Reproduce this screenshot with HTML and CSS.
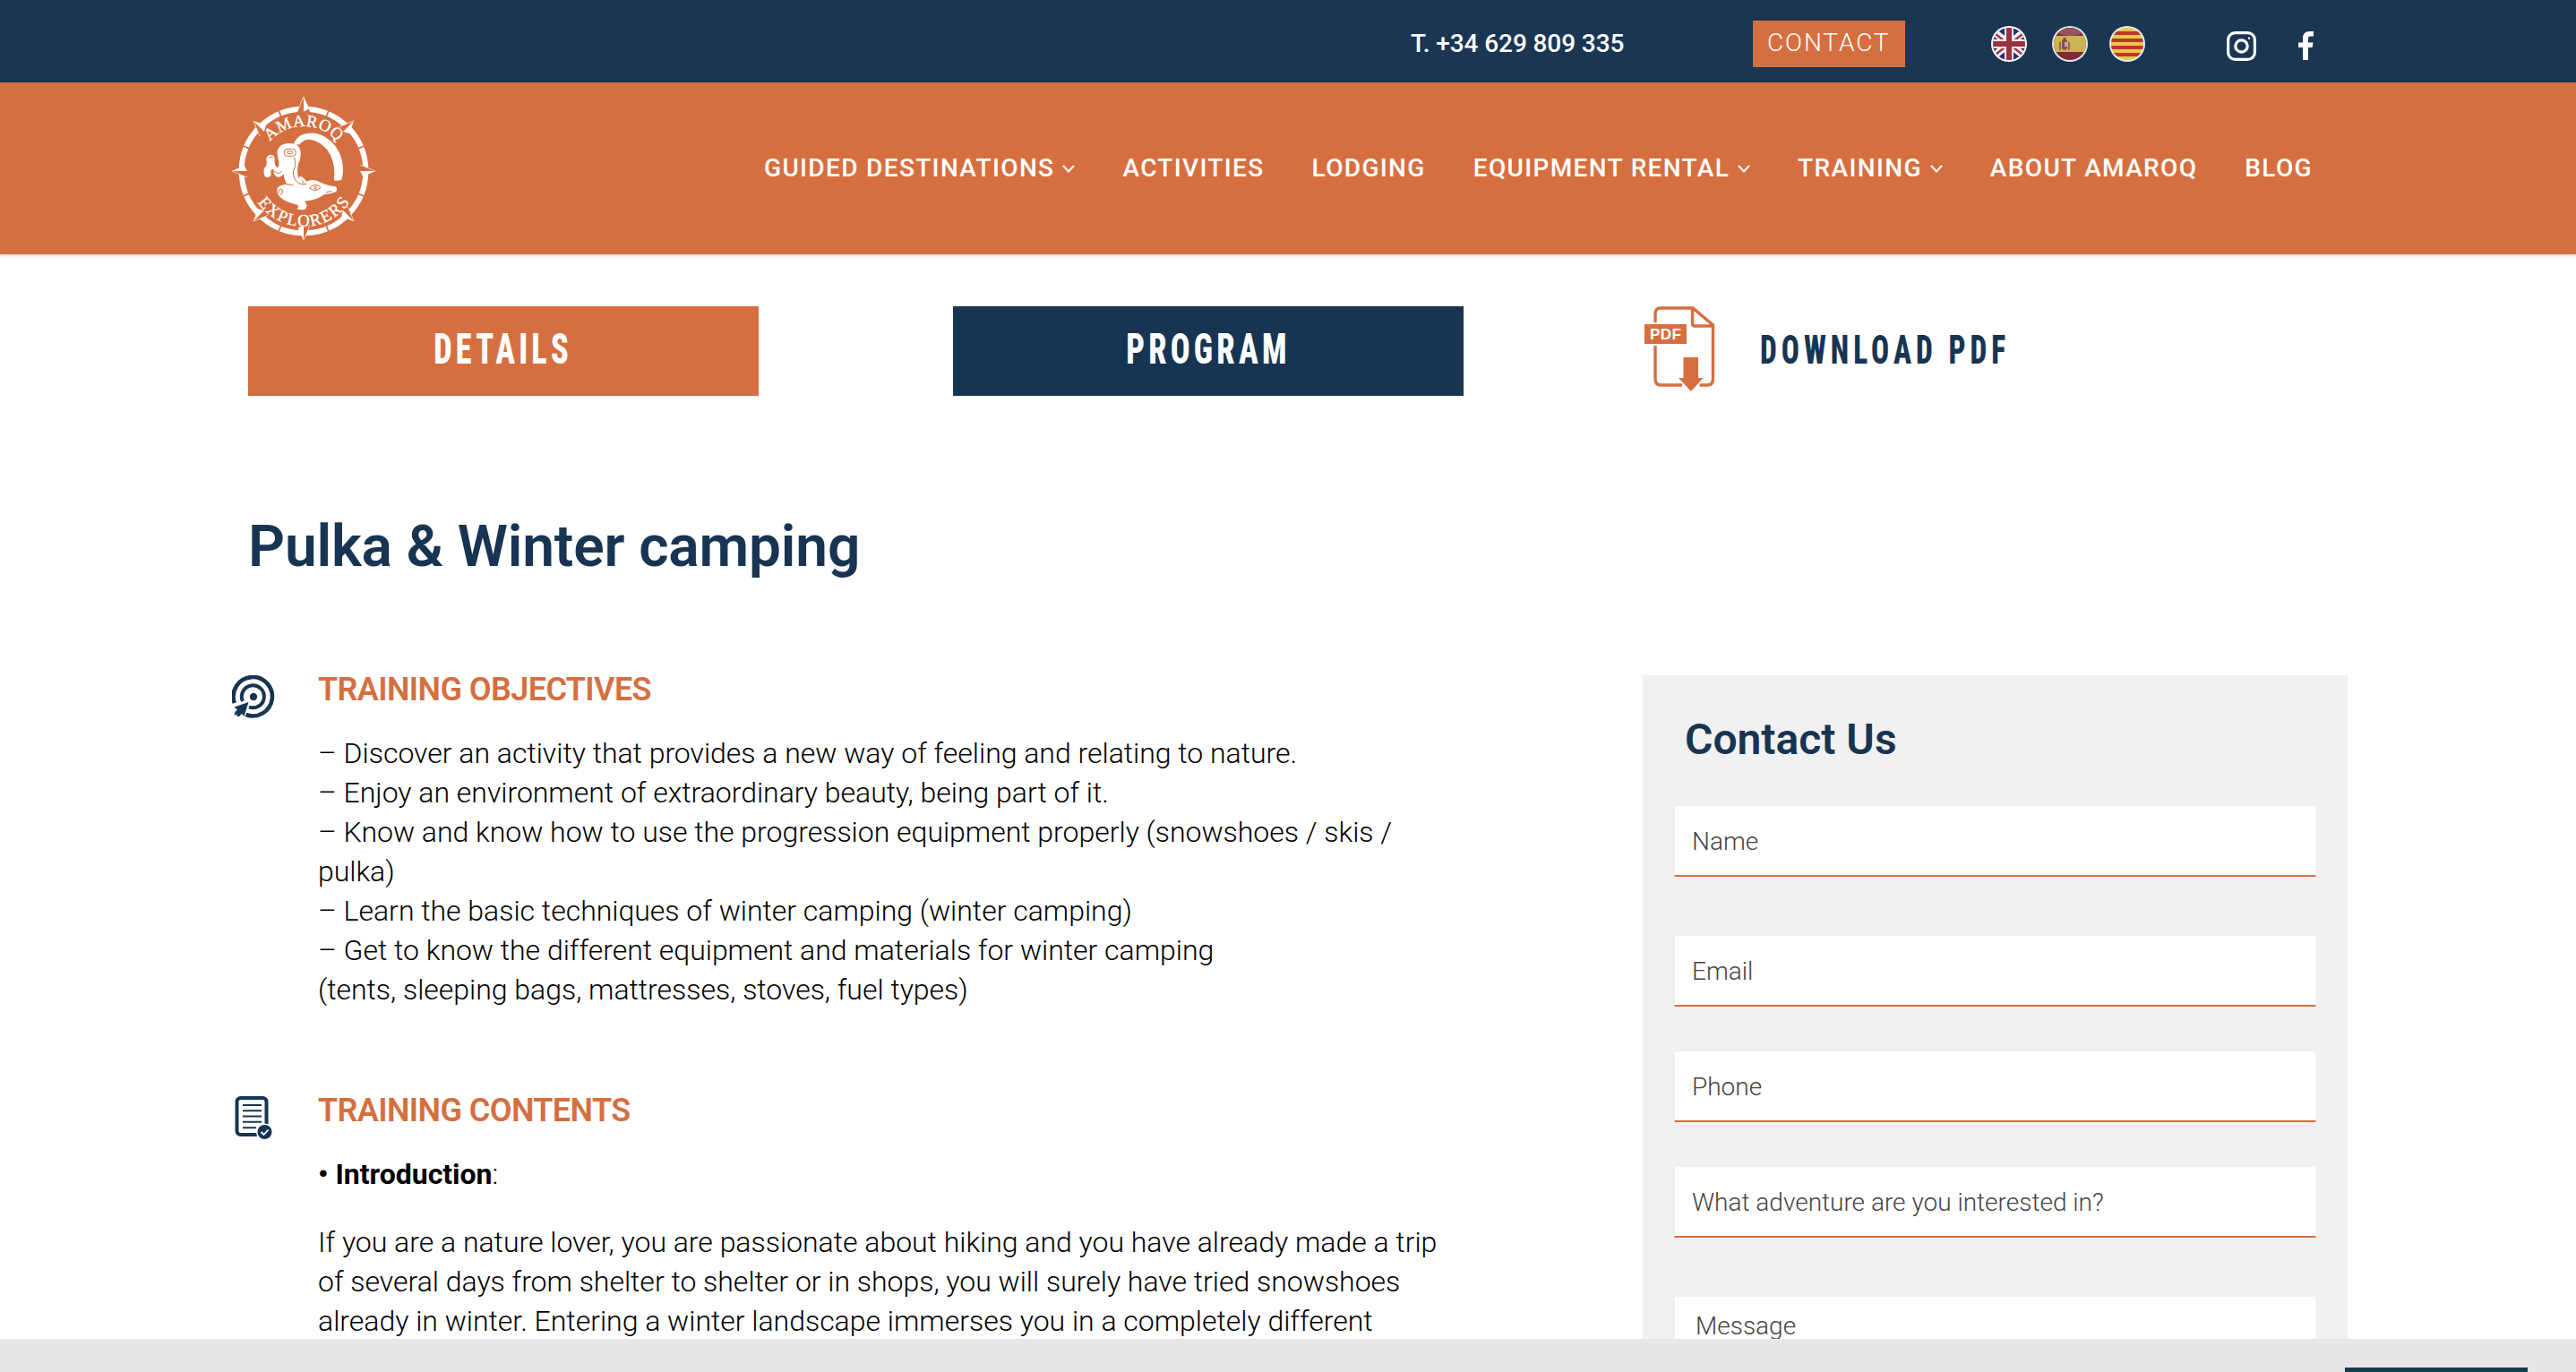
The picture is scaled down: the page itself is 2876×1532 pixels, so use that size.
FILE: index.html
```html
<!DOCTYPE html>
<html lang="en">
<head>
    <meta charset="UTF-8">
    <title>Pulka & Winter camping - Amaroq Explorers</title>
    <link rel="stylesheet" href="styles.css">
</head>
<body>

<div class="topbar">
    <span class="phone">T. +34 629 809 335</span>
    <a class="contact-btn">CONTACT</a>
    <div class="flags">
        <svg class="flag" viewBox="0 0 40 40">
            <clipPath id="round"><circle cx="20" cy="20" r="18"/></clipPath>
            <circle cx="20" cy="20" r="20" fill="#fff"/>
            <g clip-path="url(#round)">
                <rect width="40" height="40" fill="#2d3068"/>
                <path d="M0 4L40 36M40 4L0 36" stroke="#f4f1f5" stroke-width="8"/>
                <path d="M0 5L20 21M40 5L20 21M0 36L20 20M40 36L20 20" stroke="#a8323f" stroke-width="2.4"/>
                <path d="M20 0V40M0 20H40" stroke="#f7f5f6" stroke-width="10"/>
                <path d="M20 0V40M0 20H40" stroke="#98323f" stroke-width="6"/>
            </g>
        </svg>
        <svg class="flag" viewBox="0 0 40 40">
            <circle cx="20" cy="20" r="20" fill="#e3e6ea"/>
            <g clip-path="url(#round)">
                <rect width="40" height="40" fill="#7f2a35"/>
                <ellipse cx="20" cy="6" rx="14" ry="5" fill="#96555c"/>
                <rect y="11" width="40" height="18" fill="#cdb455"/>
                <path d="M9 18v9M19 18v9" stroke="#8d6a50" stroke-width="2"/>
                <path d="M11 16h6v9q-3 4-6 0z" fill="#9a4b4b"/>
                <rect x="14" y="18" width="3" height="5" fill="#b9a9b4"/>
                <circle cx="14" cy="15" r="2" fill="#8a4b3c"/>
            </g>
        </svg>
        <svg class="flag flag-cat" viewBox="0 0 40 40">
            <circle cx="20" cy="20" r="20" fill="#e8ebef"/>
            <g clip-path="url(#round)">
                <rect width="40" height="40" fill="#e3cb46"/>
                <path d="M0 8H40M0 16H40M0 24H40M0 32H40" stroke="#c0332b" stroke-width="4"/>
            </g>
        </svg>
    </div>
    <svg class="ig" viewBox="0 0 33 33" fill="none" stroke="#fff">
        <rect x="1.6" y="1.6" width="29.8" height="29.8" rx="8" stroke-width="3.2"/>
        <circle cx="16.5" cy="16.5" r="6.7" stroke-width="3.2"/>
        <circle cx="25" cy="7.8" r="1.2" fill="#fff" stroke="none"/>
    </svg>
    <svg class="fb" viewBox="0 0 17 32">
        <path d="M5 32V18H0V12.500H5V8Q5 0 12.500 0H17V5.500H13.500Q11 5.500 11 8V12.500H16.500L15.600 18H11V32z" fill="#fff"/>
    </svg>
</div>

<div class="header">
    <svg class="logo" viewBox="54 51 486 486">
        <defs>
            <path id="arcTop" d="M147 303A150 150 0 0 1 447 303"/>
            <path id="arcBottom" d="M111 303A186 186 0 0 0 483 303"/>
            <g id="spike">
                <path d="M297 53L318 105H275z" fill="#d66f40"/>
                <path d="M297 53L316 94L297 104z"/>
                <path d="M297 53L280 93L277 104" fill="none" stroke="#fff" stroke-width="2"/>
            </g>
        </defs>
        <g fill="#fff">
            <circle cx="297" cy="303" r="208" fill="none" stroke="#fff" stroke-width="18"/>
            <g stroke="#d66f40" stroke-width="5">
                <path id="cut" d="M297 80V110M297 496V526" transform="rotate(22.500 297 303)"/>
                <use href="#cut" transform="rotate(45 297 303)"/>
                <use href="#cut" transform="rotate(90 297 303)"/>
                <use href="#cut" transform="rotate(135 297 303)"/>
            </g>
            <use href="#spike"/>
            <use href="#spike" transform="rotate(90 297 303) translate(0 10)"/>
            <use href="#spike" transform="rotate(180 297 303) translate(0 18)"/>
            <use href="#spike" transform="rotate(270 297 303) translate(0 10)"/>
            <use href="#spike" transform="rotate(45 297 303) translate(0 12)"/>
            <use href="#spike" transform="rotate(135 297 303) translate(0 12)"/>
            <use href="#spike" transform="rotate(225 297 303) translate(0 12)"/>
            <use href="#spike" transform="rotate(315 297 303) translate(0 12)"/>
        </g>
        <text class="logo-text"><textPath href="#arcTop" startOffset="50%" text-anchor="middle" textLength="256">AMAROQ</textPath></text>
        <text class="logo-text"><textPath href="#arcBottom" startOffset="50%" text-anchor="middle" textLength="362">EXPLORERS</textPath></text>
        <g fill="#fff">
            <path d="M262 216Q272 188 295 180Q330 168 368 188Q410 212 424 262Q434 300 424 333L402 336Q396 330 400 318Q402 268 376 232Q350 202 318 197Q296 196 283 214z"/>
            <path d="M208 240Q212 212 246 210Q284 208 287 240Q288 262 279 280Q272 310 282 330Q280 318 290 322Q300 328 306 338Q330 326 356 342Q370 350 404 355Q412 362 406 372Q390 380 366 382Q340 402 300 404Q312 416 304 430Q292 436 274 430Q284 422 276 416Q236 408 218 390Q200 370 212 356Q222 348 240 346Q228 322 231 312Q220 326 206 322Q194 314 197 298Q184 292 188 316Q182 330 168 322Q160 306 166 292Q176 286 172 262Q176 248 188 248Q200 250 200 262Q198 282 208 292Q216 290 214 276z"/>
        </g>
        <g fill="none" stroke="#d66f40" stroke-width="3">
            <rect x="232" y="229" width="39" height="24" rx="11"/>
            <rect x="242" y="237" width="19" height="8" rx="4"/>
            <path d="M266 258Q274 284 262 304Q262 330 280 344Q294 350 308 346M208 352Q232 342 262 350"/>
            <path d="M317 360Q336 340 354 358Q336 376 317 360zM212 378Q214 356 226 366Q228 380 218 384M198 302Q212 318 224 304M181 260Q188 250 195 260"/>
            <circle cx="336" cy="359" r="4"/>
            <path d="M372 375Q380 370 392 372M292 334L298 344"/>
        </g>
    </svg>
    <div class="nav">
        <a>GUIDED DESTINATIONS<svg class="chev" viewBox="0 0 14 9"><path d="M1 1L7 7.500L13 1"/></svg></a>
        <a>ACTIVITIES</a>
        <a>LODGING</a>
        <a>EQUIPMENT RENTAL<svg class="chev" viewBox="0 0 14 9"><path d="M1 1L7 7.500L13 1"/></svg></a>
        <a>TRAINING<svg class="chev" viewBox="0 0 14 9"><path d="M1 1L7 7.500L13 1"/></svg></a>
        <a>ABOUT AMAROQ</a>
        <a>BLOG</a>
    </div>
</div>

<div class="tabs">
    <a class="tab tab-details"><span>DETAILS</span></a>
    <a class="tab tab-program"><span>PROGRAM</span></a>
    <a class="download">
        <svg class="pdf" viewBox="0 0 79 96">
            <g fill="none" stroke="#d66f40" stroke-width="3.400">
                <path d="M12 18V8.500Q12 2 18.500 2H54L76.500 21V81Q76.500 88 70 88H61.500M42 88H18.500Q12 88 12 81V44"/>
                <path d="M53.500 2V19Q53.500 22 56.500 22H76"/>
            </g>
            <rect y="20" width="47" height="22" fill="#d66f40"/>
            <path d="M43.500 57H60V80H65.500L52 95L38 80H43.500z" fill="#d66f40"/>
            <text x="6" y="37" textLength="35">PDF</text>
        </svg>
        <span>DOWNLOAD PDF</span>
    </a>
</div>

<h1>Pulka & Winter camping</h1>

<div class="main">
    <div class="content">
        <div class="block">
            <svg class="icon" viewBox="0 0 48 48">
                <g fill="none" stroke="#173552">
                    <path d="M2.800 31A21.700 21.700 0 1 1 15.500 44" stroke-width="4.600"/>
                    <path d="M12 29A12.500 12.500 0 1 1 19 35.500" stroke-width="4"/>
                </g>
                <circle cx="24" cy="24" r="4.200" fill="#173552"/>
                <path d="M18.500 30L13.500 46L11 43L8 46L5.500 46L5.500 43.500L2.500 45L3.500 41L6 38.500L2.500 35.500z" fill="#173552"/>
            </svg>
            <div class="text">
                <h2>TRAINING OBJECTIVES</h2>
                <p>– Discover an activity that provides a new way of feeling and relating to nature.<br>
                – Enjoy an environment of extraordinary beauty, being part of it.<br>
                – Know and know how to use the progression equipment properly (snowshoes / skis / pulka)<br>
                – Learn the basic techniques of winter camping (winter camping)<br>
                – Get to know the different equipment and materials for winter camping<br>
                (tents, sleeping bags, mattresses, stoves, fuel types)</p>
            </div>
        </div>
        <div class="block">
            <svg class="icon" viewBox="0 0 48 48">
                <rect x="5.500" y="2" width="33" height="41" rx="4" fill="none" stroke="#173552" stroke-width="4"/>
                <path d="M12 10H33M12 16.300H33M12 22.500H33M12 28.800H33M12 35.200H27" stroke="#173552" stroke-width="2"/>
                <circle cx="36.500" cy="40" r="9.500" fill="#fff"/>
                <circle cx="36.500" cy="40" r="8" fill="#173552"/>
                <path d="M32.500 40L35.500 43L40.500 37.500" fill="none" stroke="#fff" stroke-width="1.800"/>
            </svg>
            <div class="text">
                <h2>TRAINING CONTENTS</h2>
                <p><strong>• Introduction</strong>:</p>
                <p>If you are a nature lover, you are passionate about hiking and you have already made a trip of several days from shelter to shelter or in shops, you will surely have tried snowshoes already in winter. Entering a winter landscape immerses you in a completely different</p>
            </div>
        </div>
    </div>

    <div class="contact">
        <h3>Contact Us</h3>
        <input class="field" type="text" placeholder="Name">
        <input class="field wide-gap" type="email" placeholder="Email">
        <input class="field" type="text" placeholder="Phone">
        <input class="field" type="text" placeholder="What adventure are you interested in?">
        <textarea class="field message wide-gap" placeholder="Message"></textarea>
    </div>
</div>

<div class="cookies"><div class="cookies-btn"></div></div>

</body>
</html>
```

FILE: styles.css
```css
* {
  box-sizing: border-box;
}
body {
  margin: 0;
  height: 1532px;
  overflow: hidden;
  font-family: Roboto, sans-serif;
  background: #fff;
  color: #000;
}
h1, h2, h3, p {
  margin: 0;
}
svg {
  display: block;
  flex: none;
}

/* top bar */
.topbar {
  display: flex;
  align-items: center;
  height: 92px;
  padding: 6px 0 0 1575px;
  background: #1a3653;
  color: #fff;
}
.phone {
  width: 382px;
  padding-bottom: 2px;
  font-size: 28px;
  font-weight: 500;
  letter-spacing: -0.1px;
}
.contact-btn {
  width: 170px;
  height: 52px;
  padding: 0 0 2px 16px;
  line-height: 50px;
  background: #d66f40;
  font-size: 28px;
  font-weight: 300;
  letter-spacing: 1.9px;
}
.flags {
  display: flex;
  gap: 28px;
  margin-left: 96px;
}
.flag {
  width: 40px;
  height: 40px;
}
.flag-cat {
  margin-left: -4px;
}
.ig {
  width: 33px;
  height: 33px;
  margin: 4px 0 0 91px;
}
.fb {
  width: 17px;
  height: 32px;
  margin: 4px 0 0 47px;
}

/* header */
.header {
  display: flex;
  align-items: center;
  height: 192px;
  padding-left: 258px;
  background: #d66f40;
  box-shadow: 0 1px 4px rgba(0, 0, 0, 0.2);
}
.logo {
  width: 162px;
  height: 162px;
}
.logo-text {
  fill: #fff;
  stroke: #fff;
  stroke-width: 1px;
  font-family: "Liberation Serif", serif;
  font-size: 56px;
}
.nav {
  display: flex;
  gap: 53px;
  margin-left: 433px;
  line-height: 44px;
  color: #fff;
  font-size: 28px;
  font-weight: 500;
  letter-spacing: 1.35px;
  white-space: nowrap;
}
.nav a {
  display: flex;
  align-items: center;
}
.chev {
  width: 14px;
  height: 9px;
  margin-left: 9px;
  fill: none;
  stroke: #fff;
  stroke-width: 2;
}

/* tabs */
.tabs {
  display: flex;
  margin-top: 58px;
  padding-left: 277px;
  height: 100px;
}
.tab {
  display: flex;
  align-items: center;
  justify-content: center;
  width: 570px;
  padding: 0 1px 5px 0;
  color: #fff;
  font-family: "Roboto Condensed", Roboto, sans-serif;
  font-size: 49px;
  font-weight: 800;
  letter-spacing: 5.7px;
}
.tab span, .download span {
  display: block;
  transform: scaleX(0.74);
}
.tab-details {
  background: #d66f40;
}
.tab-program {
  margin-left: 217px;
  background: #173552;
}
.download {
  display: flex;
  align-items: center;
  margin-left: 202px;
  color: #173552;
  font-family: "Roboto Condensed", Roboto, sans-serif;
  font-size: 45px;
  font-weight: 800;
  letter-spacing: 6.8px;
  white-space: nowrap;
}
.download span {
  margin-left: 50px;
  padding-bottom: 4px;
  transform-origin: left;
}
.pdf {
  width: 79px;
  height: 96px;
  margin-bottom: 4px;
  letter-spacing: 0;
}
.pdf text {
  fill: #fff;
  font-family: "Liberation Sans", sans-serif;
  font-size: 17px;
  font-weight: bold;
}

h1 {
  margin: 129px 0 0 277px;
  line-height: 80px;
  font-size: 64px;
  font-weight: 600;
  letter-spacing: -0.15px;
  color: #173552;
}

/* training text and contact form */
.main {
  display: flex;
  justify-content: space-between;
  align-items: flex-start;
  width: 2621px;
  margin-top: 97px;
  padding-left: 259px;
}
.content {
  display: flex;
  flex-direction: column;
  gap: 91px;
  width: 1367px;
}
.block {
  display: flex;
  gap: 48px;
}
.icon {
  width: 48px;
  height: 48px;
  margin-top: 6px;
}
.text {
  width: 1270px;
  font-size: 32px;
  font-weight: 300;
  line-height: 44px;
  letter-spacing: -0.02px;
}
.text h2 {
  margin-bottom: 27px;
  color: #d66f40;
  font-size: 36px;
  font-weight: 600;
  letter-spacing: -0.6px;
}
.text strong {
  font-weight: 700;
}
.text p + p {
  margin-top: 32px;
}
.contact {
  display: flex;
  flex-direction: column;
  width: 787px;
  height: 778px;
  margin-top: 6px;
  padding: 42px 35px 0;
  background: #f1f1f1;
}
.contact h3 {
  margin: 0 0 44px 12px;
  line-height: 60px;
  font-size: 48px;
  font-weight: 600;
  color: #173552;
}
.field {
  flex: none;
  width: 717px;
  height: 79px;
  margin: 0 0 50px;
  padding: 1px 19px 0;
  border: 1px solid transparent;
  border-top: 0;
  border-bottom: 2px solid #d66f40;
  background: #fff padding-box;
  font-family: Roboto, sans-serif;
  font-size: 28px;
  font-weight: 300;
}
.field::placeholder {
  color: #444;
}
.wide-gap {
  margin-top: 16px;
}
.message {
  height: 84px;
  margin-bottom: 0;
  padding: 15px 23px 0;
  line-height: 36px;
  resize: none;
}

/* cookie bar */
.cookies {
  position: fixed;
  left: 0;
  right: 0;
  bottom: 0;
  height: 37px;
  background: #e8e7e5;
}
.cookies-btn {
  width: 204px;
  height: 5px;
  margin: 32px 0 0 2618px;
  background: #173b4f;
}
```
